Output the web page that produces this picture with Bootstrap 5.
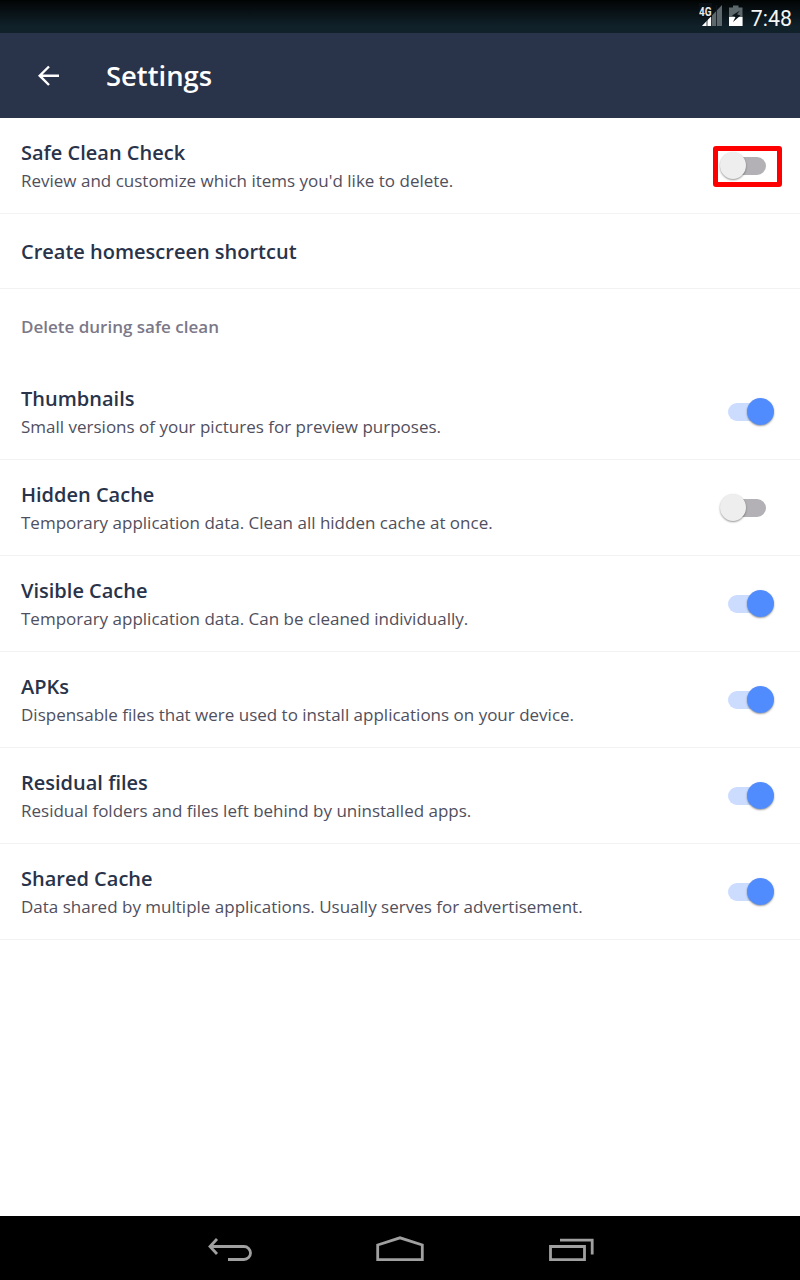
<!DOCTYPE html>
<html lang="en">
<head>
<meta charset="utf-8">
<meta name="viewport" content="width=device-width, initial-scale=1">
<title>Settings</title>
<link href="https://cdn.jsdelivr.net/npm/bootstrap@5.3.0/dist/css/bootstrap.min.css" rel="stylesheet">
<style>
  body { font-family: "Open Sans", sans-serif; color: #29334a; height: 1280px; background: #fff; overflow: hidden; }
  .status-bar { height: 33px; background: linear-gradient(#020404, #10212a 80%); padding: 0 8px 0 0; }
  .clock { font: 21.33px/33px Roboto, sans-serif; color: #f4f5f5; padding-top: 3px; }
  .app-bar { height: 85px; background: #29334a; padding-left: 37px; }
  .app-title { font-size: 27.4px; font-weight: 600; line-height: 36px; margin-left: 46px; }
  .setting { height: 96px; padding: 1px 34px 0 21px; border-bottom: 1px solid #f2f2f3; }
  .setting-short { height: 75px; }
  .setting-name { font-size: 20px; line-height: 28px; font-weight: 600; }
  .setting-note { font-size: 17px; line-height: 24px; color: #504f5d; margin-top: 2px; }
  .section-label { height: 75px; padding: 0 21px; font-size: 17px; font-weight: 600; color: #7b7888; }
  .toggle { width: 38px; height: 18px; border-radius: 9px; background: #b3b1b5; }
  .toggle::after { content: ""; position: absolute; width: 26px; height: 27px; border-radius: 50%; top: -5px; left: -8px; background: #eee; box-shadow: 0 1px 2px rgba(0,0,0,.42); }
  .toggle.on { background: #cbdcff; }
  .toggle.on::after { width: 27px; height: 27px; left: 19px; background: #518cff; }
  .marked::before { content: ""; position: absolute; width: 69px; height: 41px; border: 5px solid #f00; border-radius: 3px; left: -15px; top: -11px; }
  .nav-keys { height: 64px; background: #000; }
</style>
</head>
<body class="d-flex flex-column m-0">
<div class="status-bar d-flex justify-content-end align-items-center flex-shrink-0">
  <svg width="52" height="33" viewBox="0 0 52 33">
    <path d="M3 26 23 5V26Z" fill="#5d686d"/>
    <path d="M3 26 12.500 16V26Z" fill="#fff"/>
    <path d="M8 17V26M12.500 5V26M17.500 5V26" stroke="#0c171d" stroke-width=".8"/>
    <rect x="-1" y="3" width="14" height="14" fill="#0a1116"/>
    <text x="0" y="15.500" font-family="Roboto, sans-serif" font-size="12.500" font-weight="700" textLength="12.500" lengthAdjust="spacingAndGlyphs" fill="#e8eaea">4G</text>
    <path d="M30 7.500H34V5.500H39.500V7.500H43.500V26H30Z" fill="#5d686d"/>
    <path d="M30 17H43.500V26H30Z" fill="#fff"/>
    <path d="M41 10.500 33 15.500 36.500 17 34 22 41.500 15.500 38 14.200Z" fill="#0b151a"/>
  </svg>
  <span class="clock">7:48</span>
</div>
<header class="app-bar d-flex align-items-center flex-shrink-0 text-white">
  <svg width="23" height="22" viewBox="0 0 23 22" fill="none" stroke="#fff" stroke-width="2.4"><path d="M12 1.500 2.700 10.700 12 20M3 10.700H22"/></svg>
  <h1 class="app-title mb-0">Settings</h1>
</header>
<main class="flex-grow-1">
  <div class="setting d-flex align-items-center justify-content-between">
    <div><div class="setting-name">Safe Clean Check</div><div class="setting-note">Review and customize which items you'd like to delete.</div></div>
    <div class="toggle marked position-relative"></div>
  </div>
  <div class="setting setting-short d-flex align-items-center"><div class="setting-name">Create homescreen shortcut</div></div>
  <div class="section-label d-flex align-items-center">Delete during safe clean</div>
  <div class="setting d-flex align-items-center justify-content-between">
    <div><div class="setting-name">Thumbnails</div><div class="setting-note">Small versions of your pictures for preview purposes.</div></div>
    <div class="toggle on position-relative"></div>
  </div>
  <div class="setting d-flex align-items-center justify-content-between">
    <div><div class="setting-name">Hidden Cache</div><div class="setting-note">Temporary application data. Clean all hidden cache at once.</div></div>
    <div class="toggle position-relative"></div>
  </div>
  <div class="setting d-flex align-items-center justify-content-between">
    <div><div class="setting-name">Visible Cache</div><div class="setting-note">Temporary application data. Can be cleaned individually.</div></div>
    <div class="toggle on position-relative"></div>
  </div>
  <div class="setting d-flex align-items-center justify-content-between">
    <div><div class="setting-name">APKs</div><div class="setting-note">Dispensable files that were used to install applications on your device.</div></div>
    <div class="toggle on position-relative"></div>
  </div>
  <div class="setting d-flex align-items-center justify-content-between">
    <div><div class="setting-name">Residual files</div><div class="setting-note">Residual folders and files left behind by uninstalled apps.</div></div>
    <div class="toggle on position-relative"></div>
  </div>
  <div class="setting d-flex align-items-center justify-content-between">
    <div><div class="setting-name">Shared Cache</div><div class="setting-note">Data shared by multiple applications. Usually serves for advertisement.</div></div>
    <div class="toggle on position-relative"></div>
  </div>
</main>
<footer class="nav-keys flex-shrink-0 d-flex justify-content-center">
  <svg width="400" height="64" viewBox="200 1216 400 64" fill="none" stroke="#a0a0a0" stroke-width="2.8">
    <path d="M217 1239 210 1246.500 217 1254M210 1246.500H244A6.500 6.500 0 0 1 244 1259.500H228"/>
    <path d="M377.700 1245 400 1237.800 422.300 1245V1259.700H377.700Z"/>
    <path d="M550.500 1246.500H584.500V1259.700H550.500ZM560 1240.200H592.200V1254.500"/>
  </svg>
</footer>
<script src="https://cdn.jsdelivr.net/npm/bootstrap@5.3.0/dist/js/bootstrap.bundle.min.js"></script>
</body>
</html>
